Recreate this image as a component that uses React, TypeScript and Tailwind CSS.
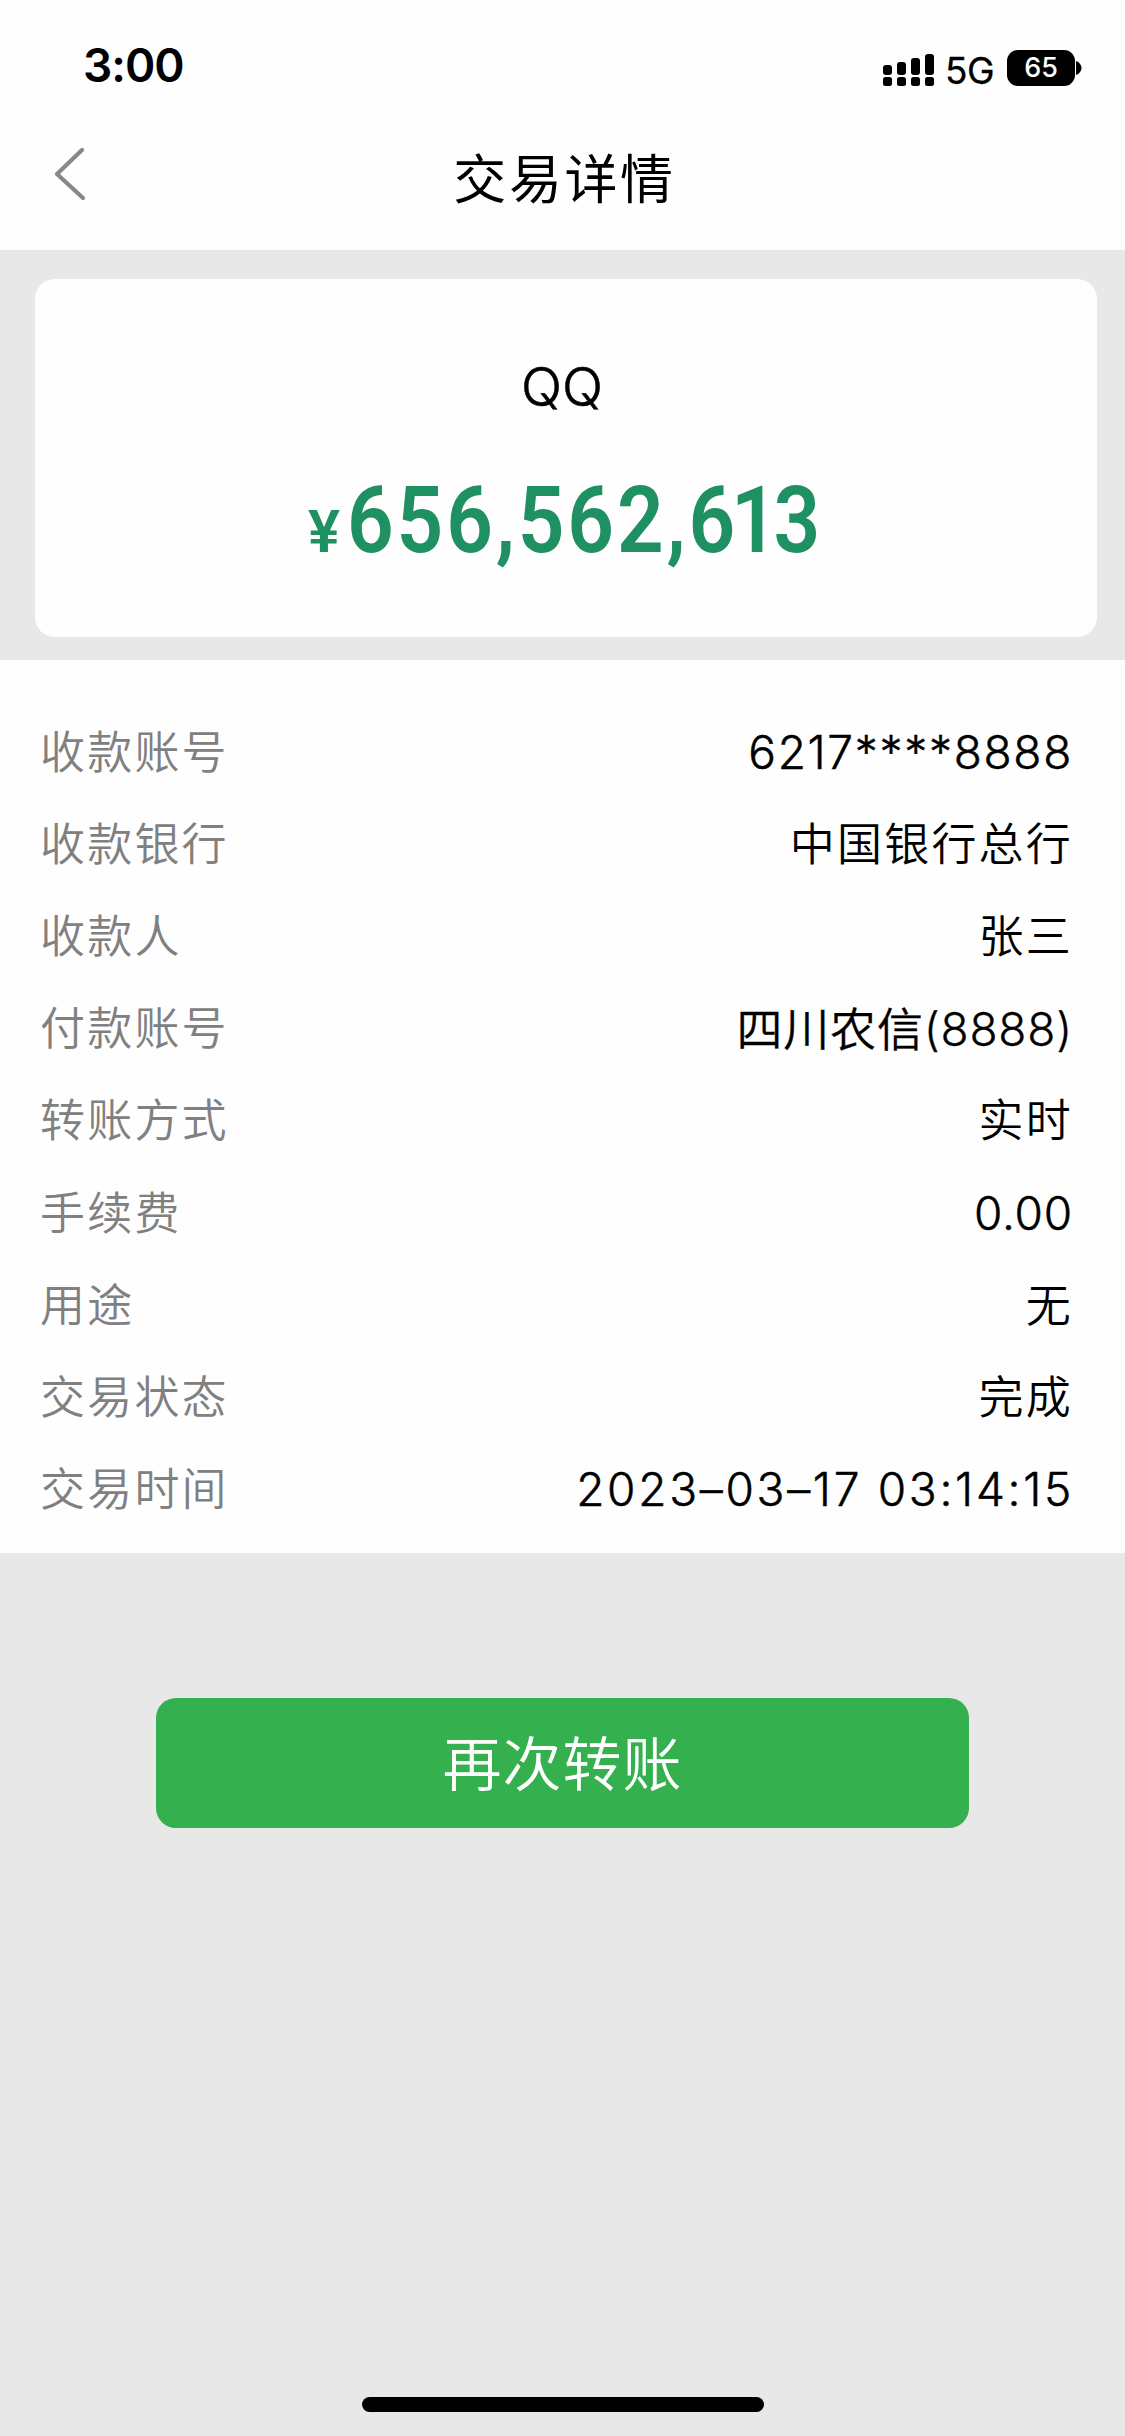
const rows: { label: string; value: string; style: string }[] = [
  { label: "收款账号", value: "6217****8888", style: "tracking-[1.7px] text-[46px] font-light pb-0.5 [-webkit-text-stroke:0.5px_black]" },
  { label: "收款银行", value: "中国银行总行", style: "tracking-[2.2px] text-[45px] font-[350]" },
  { label: "收款人", value: "张三", style: "tracking-[2.2px] text-[45px] font-[350]" },
  { label: "付款账号", value: "四川农信(8888)", style: "tracking-[0.8px] text-[46px] font-[350] [-webkit-text-stroke:0.3px_black]" },
  { label: "转账方式", value: "实时", style: "tracking-[2.2px] text-[45px] font-[350]" },
  { label: "手续费", value: "0.00", style: "tracking-[0.8px] text-[46px] font-light pb-0.5 [-webkit-text-stroke:0.5px_black]" },
  { label: "用途", value: "无", style: "tracking-[2.2px] text-[45px] font-[350]" },
  { label: "交易状态", value: "完成", style: "tracking-[2.2px] text-[45px] font-[350]" },
  { label: "交易时间", value: "2023–03–17 03:14:15", style: "tracking-[2.7px] text-[46px] font-light pb-0.5 -mr-px [-webkit-text-stroke:0.5px_black]" },
];

function SignalIcon() {
  const tops = [65, 62, 58, 54];
  return (
    <svg width="52" height="32" viewBox="0 54 52 32" aria-hidden="true">
      {tops.map((top, i) => (
        <g key={top}>
          <rect x={i * 14} y={top} width="9" height={75 - top} rx="3" />
          <rect x={i * 14} y="77" width="9" height="9" rx="2.5" />
        </g>
      ))}
    </svg>
  );
}

function StatusBar() {
  return (
    <div className="flex h-[132px] items-start justify-between pr-[43px] pl-[83px]">
      <div className="mt-[35px] text-[46px] leading-[60px] font-semibold tracking-[-1px]">3:00</div>
      <div className="mt-[50px] flex h-9">
        <div className="mt-1">
          <SignalIcon />
        </div>
        <div className="ml-[10px] w-[62px] text-[37px] leading-[42px] font-normal tracking-[-0.6px] [-webkit-text-stroke:0.3px_black]">
          5G
        </div>
        <div className="h-9 w-[68px] rounded-[11px] bg-black text-center text-[27px] leading-9 font-medium text-white">
          65
        </div>
        <svg className="mt-[11px] ml-[1px]" width="6" height="14" viewBox="0 0 6 14" aria-hidden="true">
          <path d="M0 0C3 1 5.5 4 5.5 7S3 13 0 14Z" />
        </svg>
      </div>
    </div>
  );
}

function NavBar() {
  return (
    <div className="grid h-[118px] grid-cols-[1fr_auto_1fr] items-start">
      <svg className="mt-[14px] ml-[52px]" width="34" height="56" viewBox="0 0 34 56" fill="none" aria-hidden="true">
        <path d="M30 4L5 28L31 52" stroke="#8a8883" strokeWidth="4.2" strokeLinecap="round" strokeLinejoin="round" />
      </svg>
      <h1 className="mt-[12px] pl-1 text-[53px] leading-[72px] font-normal tracking-[2.6px]">交易详情</h1>
    </div>
  );
}

export default function App() {
  return (
    <main className="flex h-[2436px] w-[1125px] flex-col bg-[#e8e8e8] font-['Inter','Noto_Sans_CJK_SC',sans-serif] text-black">
      <header className="h-[250px] bg-[#fefefe]">
        <StatusBar />
        <NavBar />
      </header>

      <section className="mt-[29px] mr-7 ml-[35px] h-[358px] rounded-[20px] bg-[#fefefe] pt-[76px]">
        <div className="pr-2 text-center text-[54px] leading-[64px] font-light [-webkit-text-stroke:0.6px_black]">QQ</div>
        <div className="mt-[47px] flex items-baseline pl-[273px] font-['Roboto',sans-serif] leading-[110px] font-semibold text-[#1f9061]">
          <span className="w-[39px] shrink-0 text-[60px]">¥</span>
          <span className="origin-left scale-x-[0.88] text-[93px] tracking-[3.2px]">
            656,562,<span className="tracking-[-4.8px]">61</span>3
          </span>
        </div>
      </section>

      <section className="mt-[23px] h-[893px] bg-[#fefefe] pt-[47px] pr-[52px] pl-10">
        {rows.map((row) => (
          <div key={row.label} className="flex h-[92.1px] items-center justify-between leading-[60px]">
            <span className="text-[45px] font-[350] tracking-[2.2px] text-[#808080]">{row.label}</span>
            <span className={`whitespace-pre ${row.style}`}>{row.value}</span>
          </div>
        ))}
      </section>

      <button className="mt-[145px] ml-[156px] h-[130px] w-[813px] rounded-[20px] bg-[#35b04e] pt-[3px] text-[59px] leading-[127px] font-[350] tracking-[1px] text-white">
        再次转账
      </button>

      <div className="mt-auto mb-6 ml-[362px] h-[15px] w-[402px] rounded-full bg-black" />
    </main>
  );
}
